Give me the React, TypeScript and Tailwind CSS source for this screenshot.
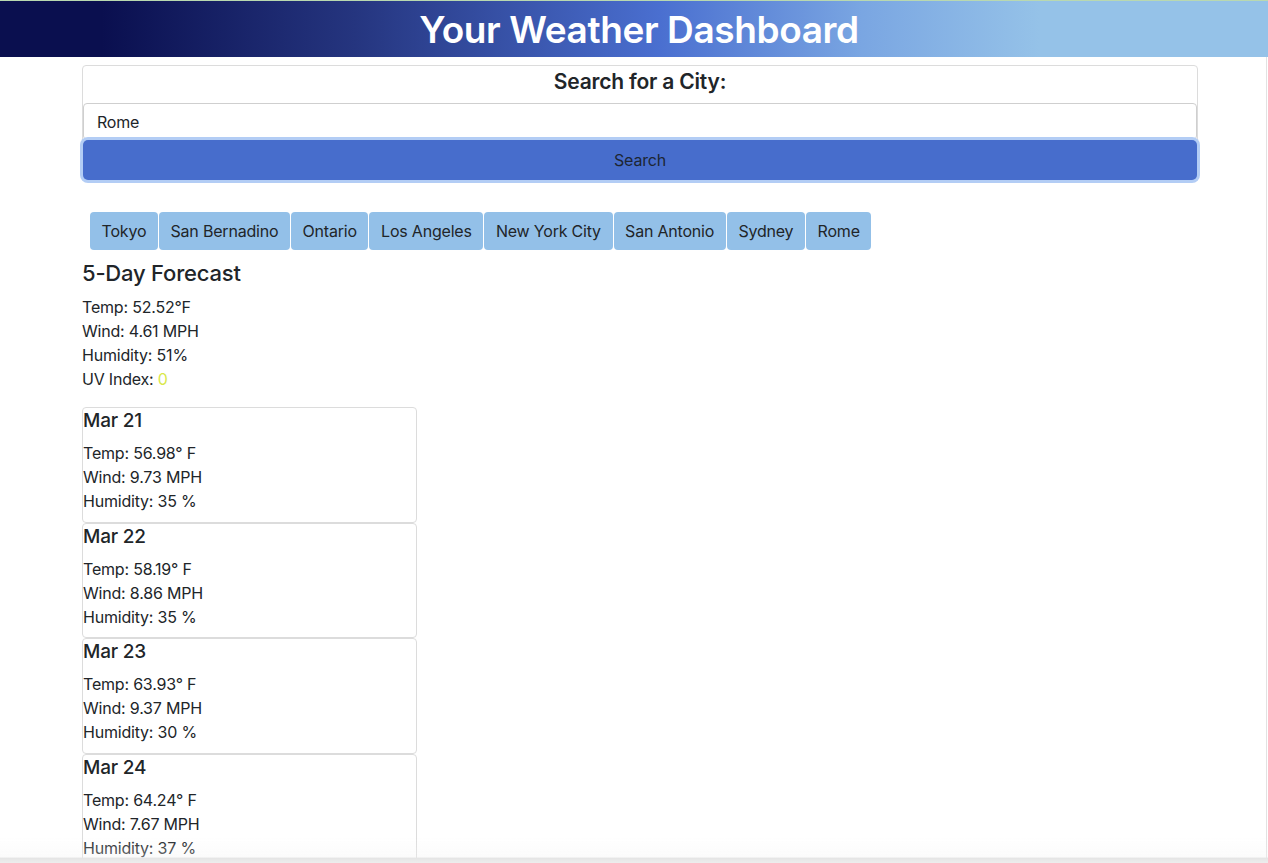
import React from "react";

const cities = ["Tokyo", "San Bernadino", "Ontario", "Los Angeles", "New York City", "San Antonio", "Sydney", "Rome"];

const days = [
  { d: "Mar 21", t: "56.98", w: "9.73", h: "35" },
  { d: "Mar 22", t: "58.19", w: "8.86", h: "35" },
  { d: "Mar 23", t: "63.93", w: "9.37", h: "30" },
  { d: "Mar 24", t: "64.24", w: "7.67", h: "37" },
  { d: "Mar 25", t: "61.02", w: "6.12", h: "40" },
];

export default function App() {
  return (
    <div className="min-h-screen bg-white text-[#212529] tracking-[-0.2px]" style={{ fontFamily: "Inter, 'Noto Sans', sans-serif" }}>
      <header className="h-[57px] border-t border-[#b9d8b0] flex items-center justify-center bg-[linear-gradient(90deg,#0a0f4f_0%,#0a0f4f_8%,#25357f_28%,#4a6fd0_52%,#7aa6e2_68%,#95c2e8_82%,#95c2e8_100%)]">
        <h1 className="text-white text-[37px] font-semibold leading-none tracking-[-0.4px] mt-[1px] ml-[10px]">Your Weather Dashboard</h1>
      </header>

      <div className="w-[1116px] ml-[82px] mt-[8px]">
        <div className="border border-[#dcdcdc] rounded-[4px]">
          <h3 className="h-[37px] flex items-center justify-center text-[21px] font-semibold pb-[5px]">Search for a City:</h3>
          <div className="h-[37px] border border-[#cfcfcf] rounded-[4px] flex items-center pl-[13px] text-[16px]">Rome</div>
          <button className="w-full h-[40px] bg-[#476dcc] rounded-[5px] ring-[3px] ring-[#b3cdf5] text-[16px] text-[#1d2633] flex items-center justify-center">Search</button>
        </div>

        <div className="flex gap-[1px] ml-[8px] mt-[31px]">
          {cities.map((c) => (
            <div key={c} className="h-[38px] px-[11.6px] bg-[#93c0e8] rounded-[4px] flex items-center text-[16px]">{c}</div>
          ))}
        </div>

        <h4 className="text-[22px] font-medium mt-[9px] leading-[29px]">5-Day Forecast</h4>
        <div className="mt-[7px] text-[16px] leading-[24px]">
          <p>Temp: 52.52°F</p>
          <p>Wind: 4.61 MPH</p>
          <p>Humidity: 51%</p>
          <p>UV Index: <span className="text-[#d9e84a]">0</span></p>
        </div>

        <div className="mt-[16px] w-[335px] flex flex-col">
          {days.map((x) => (
            <div key={x.d} className="h-[115.7px] border border-[#dcdcdc] rounded-[4px] pt-[1px]">
              <h5 className="text-[19px] font-medium leading-[24px]">{x.d}</h5>
              <div className="mt-[8px] text-[16px] leading-[24px]">
                <p>Temp: {x.t}° F</p>
                <p>Wind: {x.w} MPH</p>
                <p>Humidity: {x.h} %</p>
              </div>
            </div>
          ))}
        </div>
      </div>

      <div className="fixed top-[57px] bottom-0 right-[1px] w-[1px] bg-[#e2e2e2]" />
      <div className="fixed left-0 right-0 bottom-0 h-[26px] bg-[linear-gradient(180deg,rgba(255,255,255,0)_0%,rgba(244,244,244,0.35)_78%,#e4e4e4_80%,#ededed_100%)]" />
    </div>
  );
}
